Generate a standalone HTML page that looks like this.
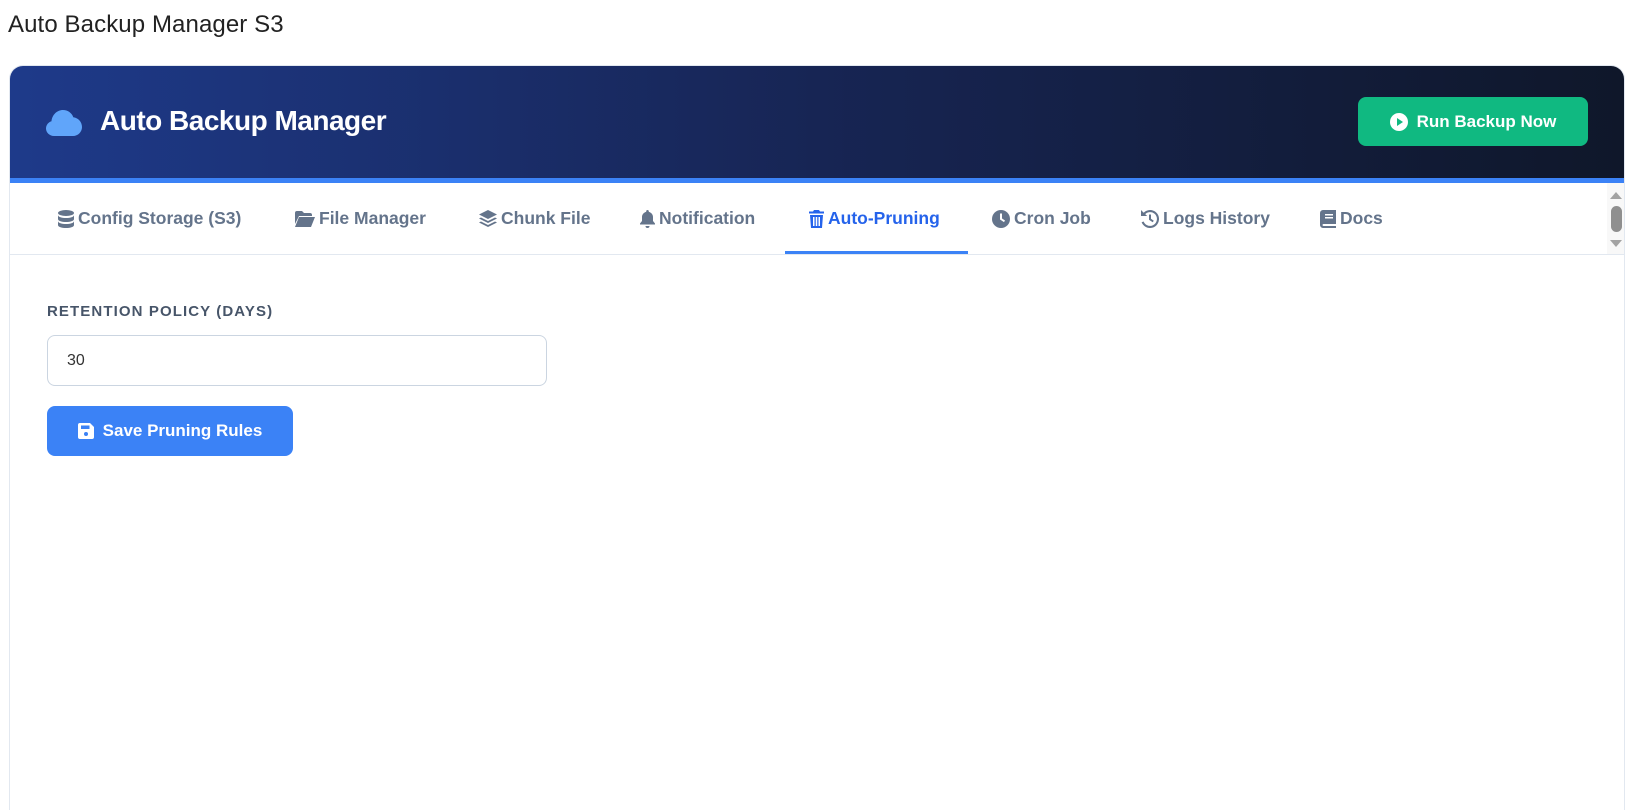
<!DOCTYPE html>
<html><head><meta charset="utf-8"><style>
*{margin:0;padding:0;box-sizing:border-box}
html,body{width:1636px;height:810px;overflow:hidden}
body{background:#fff;font-family:"Liberation Sans",sans-serif;position:relative}
.abs{position:absolute}
.title{left:8px;top:11px;font-size:24px;color:#222;letter-spacing:0.1px}
.card{left:9px;top:65px;width:1616px;height:745px;border:1px solid #e2e8f0;border-bottom:none;border-radius:14px 14px 0 0;overflow:hidden;background:#fff}
.hdr{left:0;top:0;width:100%;height:112px;background:linear-gradient(90deg,#1e3a8a 0%,#172554 50%,#0f172a 100%)}
.stripe{left:0;top:112px;width:100%;height:5px;background:#3b82f6}
.htxt{left:90px;top:39px;font-size:28px;font-weight:bold;color:#fff;letter-spacing:-0.5px}
.run{left:1348px;top:31px;width:230px;height:49px;background:#10b981;border-radius:8px;color:#fff;font-size:17px;font-weight:bold;display:flex;align-items:center;justify-content:center;gap:9px}
.tabs{left:0;top:117px;width:100%;height:72px;border-bottom:1px solid #e2e8f0}
.tab{position:absolute;top:25px;font-size:17.5px;font-weight:bold;color:#64748b;display:flex;align-items:center;gap:4px;white-space:nowrap}
.tab svg{fill:#64748b}
.tab.act{color:#2563eb}.tab.act svg{fill:#2563eb}
.ul{left:775px;top:185px;width:183px;height:3px;background:#3b82f6}
.sb{left:1597px;top:117px;width:19px;height:71px;background:#f8f8f8}
.lbl{left:37px;top:237px;font-size:15px;font-weight:bold;color:#475569;letter-spacing:1.1px}
.inp{left:37px;top:269px;width:500px;height:51px;border:1px solid #cbd5e1;border-radius:8px;font-size:16px;color:#333;padding:16px 0 0 19px}
.save{left:37px;top:340px;width:246px;height:50px;background:#3b82f6;border-radius:8px;color:#fff;font-size:17px;font-weight:bold;display:flex;align-items:center;justify-content:center;gap:9px}
</style></head><body>
<div class="abs title">Auto Backup Manager S3</div>
<div class="abs card">
 <div class="abs hdr"></div>
 <div class="abs stripe"></div>
 <svg class="abs" style="left:36px;top:44px" width="36" height="26" viewBox="0 0 36 26"><path fill="#60a5fa" d="M8 26C3.5 26 0 22.5 0 18.5c0-3.5 2.3-6.300 5.5-7.3C6 5 11 0 17 0c4.8 0 8.8 3 10.3 7.2C32.3 7.8 36 12 36 17c0 5-4 9-9 9z"/></svg>
 <div class="abs htxt">Auto Backup Manager</div>
 <div class="abs run"><svg width="18" height="18" viewBox="0 0 18 18"><circle cx="9" cy="9" r="9" fill="#fff"/><path d="M7 5l6 4-6 4z" fill="#10b981"/></svg>Run Backup Now</div>
 <div class="abs tabs">
  <div class="tab" style="left:48px"><svg width="16" height="18" viewBox="0 0 16 18"><ellipse cx="8" cy="3" rx="8" ry="3"/><path d="M0 5c0 4 16 4 16 0v4c0 4-16 4-16 0zM0 11c0 4 16 4 16 0v4c0 4-16 4-16 0z"/></svg>Config Storage (S3)</div>
  <div class="tab" style="left:285px"><svg width="20" height="16" viewBox="0 0 20 16"><path d="M0 2a2 2 0 012-2h5l2 2h6a2 2 0 012 2v1H4L0 13z"/><path d="M4 6h16l-4 10H0z"/></svg>File Manager</div>
  <div class="tab" style="left:469px"><svg width="18" height="18" viewBox="0 0 18 18"><path d="M9 0l9 4.5-9 4.5-9-4.5z"/><path d="M0 8.5l2-1 7 3.5 7-3.5 2 1-9 4.5z"/><path d="M0 12.5l2-1 7 3.5 7-3.5 2 1-9 4.5z"/></svg>Chunk File</div>
  <div class="tab" style="left:630px"><svg width="15" height="18" viewBox="0 0 15 18"><path d="M7.5 0c.8 0 1.3.6 1.3 1.3v.6C11.3 2.5 13 4.6 13 7v4l2 2.5v1H0v-1L2 11V7c0-2.4 1.7-4.5 4.2-5.1v-.6C6.2.6 6.7 0 7.5 0zM5.5 16h4a2 2 0 01-4 0z"/></svg>Notification</div>
  <div class="tab act" style="left:799px"><svg width="15" height="18" viewBox="0 0 15 18"><path d="M5 0h5l1 1.5h4v2H0v-2h4z"/><path d="M1 5h13l-1 13H2zM4 7v9h1.5V7zM6.75 7v9h1.5V7zM9.5 7v9H11V7z"/></svg>Auto-Pruning</div>
  <div class="tab" style="left:982px"><svg width="18" height="18" viewBox="0 0 18 18"><circle cx="9" cy="9" r="9"/><path d="M8 3.5h2v5l3 2-1 1.6L8 9.5z" fill="#fff"/></svg>Cron Job</div>
  <div class="tab" style="left:1131px"><svg width="18" height="18" viewBox="0 0 18 18"><path d="M9 0a9 9 0 11-8.4 12.2l2-.7A6.9 6.9 0 109 2.1a6.8 6.8 0 00-4.8 2L6.2 6H0V0l2.7 2.7A9 9 0 019 0z"/><path d="M8 4.5h2v4.2l2.8 2-1.1 1.6L8 9.8z"/></svg>Logs History</div>
  <div class="tab" style="left:1310px"><svg width="16" height="18" viewBox="0 0 16 18"><path d="M3 0h13v14H3.5a1 1 0 000 2H16v2H3a3 3 0 01-3-3V3a3 3 0 013-3zm2 4v1.5h8V4zm0 3v1.5h8V7z"/></svg>Docs</div>
 </div>
 <div class="abs ul"></div>
 <div class="abs sb">
  <svg class="abs" style="left:3px;top:9px" width="12" height="7"><path d="M0 7L6 0l6 7z" fill="#a3a3a3"/></svg>
  <div class="abs" style="left:4px;top:23px;width:11px;height:26px;border-radius:6px;background:#8f8f8f"></div>
  <svg class="abs" style="left:3px;top:57px" width="12" height="7"><path d="M0 0h12L6 7z" fill="#a3a3a3"/></svg>
 </div>
 <div class="abs lbl">RETENTION POLICY (DAYS)</div>
 <div class="abs inp">30</div>
 <div class="abs save"><svg width="16" height="16" viewBox="0 0 16 16"><path fill="#fff" d="M2 0h10l4 4v10a2 2 0 01-2 2H2a2 2 0 01-2-2V2a2 2 0 012-2zm1 2.5v3.5h8.5V2.5z"/><circle cx="8" cy="11" r="2" fill="#3b82f6"/></svg>Save Pruning Rules</div>
</div>
</body></html>
